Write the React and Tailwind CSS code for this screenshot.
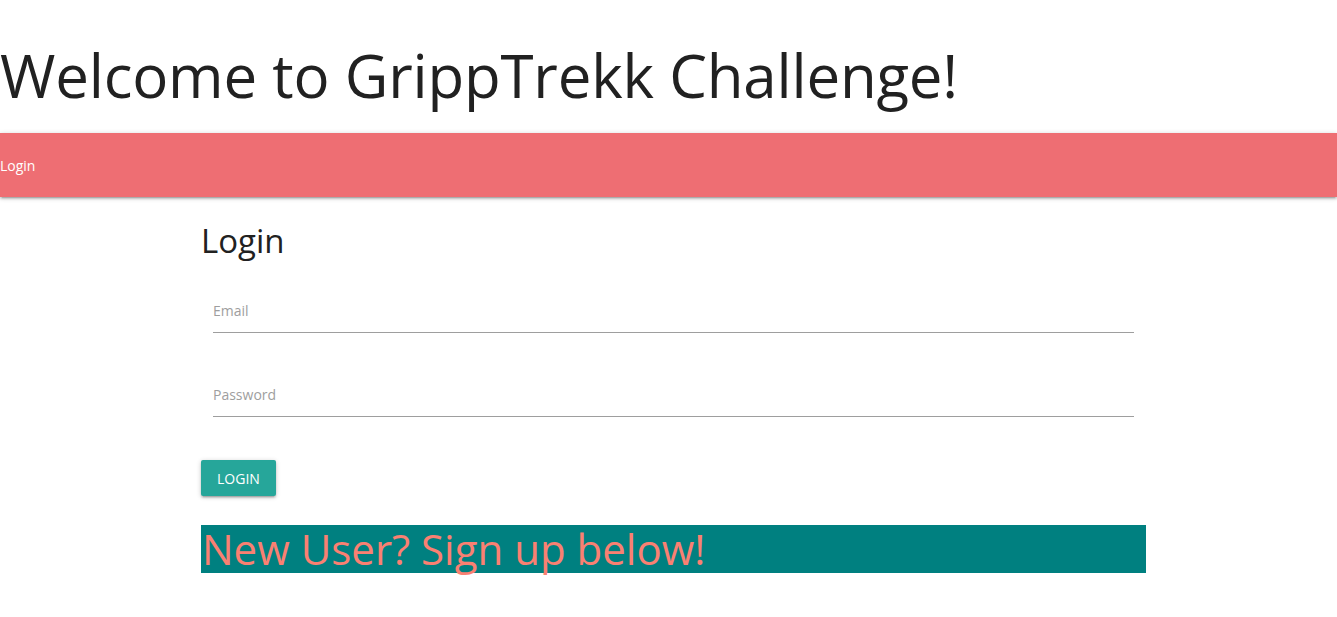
import React from "react";

const font = { fontFamily: '"Open Sans", "Noto Sans", sans-serif' };

const Field = ({ label }) => (
  <div className="px-3 pt-[14px]">
    <div className="flex h-[30px] items-end pb-[11px] text-[14px] text-[#9e9e9e]">
      {label}
    </div>
    <div className="h-px bg-[#9e9e9e]" />
  </div>
);

const App = () => {
  return (
    <div className="bg-white text-[#212121]" style={font}>
      <h1 className="pt-[38px] pb-[21px] text-[60px] leading-[74px] font-normal tracking-[-0.2px] text-[#212121]">
        Welcome to GrippTrekk Challenge!
      </h1>

      <nav className="flex h-16 items-center bg-[#ee6e73] text-[14px] text-white shadow-[0_2px_2px_0_rgba(0,0,0,0.14),0_3px_1px_-2px_rgba(0,0,0,0.12),0_1px_5px_0_rgba(0,0,0,0.2)]">
        Login
      </nav>

      <div className="ml-[201px] w-[945px] pb-[44px]">
        <h4 className="pt-[20px] text-[33px] leading-[48px] text-[#212121]">Login</h4>

        <div className="mt-[23px] flex flex-col gap-[39px]">
          <Field label="Email" />
          <Field label="Password" />
        </div>

        <button className="mt-[43px] h-9 rounded-[2px] bg-[#26a69a] px-4 text-[14px] uppercase text-white shadow-[0_2px_2px_0_rgba(0,0,0,0.14),0_3px_1px_-2px_rgba(0,0,0,0.12),0_1px_5px_0_rgba(0,0,0,0.2)]">
          Login
        </button>

        <div className="mt-[29px] h-12 bg-[#008080] pl-px text-[42px] leading-[48px] text-[#fa8072]">
          New User? Sign up below!
        </div>
      </div>
    </div>
  );
};

export default App;
